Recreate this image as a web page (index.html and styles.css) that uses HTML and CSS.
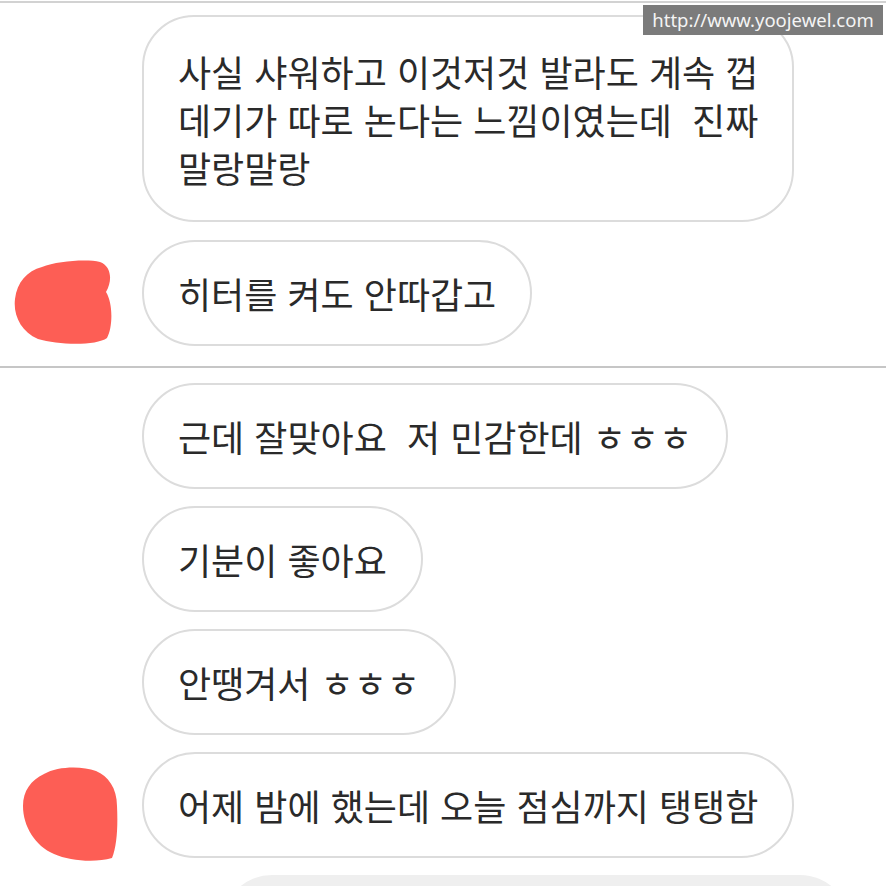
FILE: index.html
```
<!DOCTYPE html>
<html lang="ko">

<head>
    <meta charset="UTF-8">
    <meta name="viewport" content="width=device-width, initial-scale=1.0">
    <title>대화</title>
    <link rel="stylesheet" href="styles.css">
</head>

<body>
    <div class="topline"></div>
    <div class="watermark">http://www.yoojewel.com</div>

    <div class="chat chat-first">
        <div class="row">
            <div class="bubble">사실 샤워하고 이것저것 발라도 계속 껍<br>데기가 따로 논다는 느낌이였는데&nbsp; 진짜<br>말랑말랑</div>
        </div>
        <div class="row row-avatar">
            <div class="avatar avatar-one">
                <svg width="100" height="86" viewBox="0 0 100 86">
                    <path d="M30 8 C45 2 75 0 88 3 C99 7 101 21 94 33 C101 44 101 68 95 79 C84 87 46 86 26 80 C9 73 1 56 3 40 C5 23 15 12 30 8 Z" fill="#fd5e55"/>
                </svg>
            </div>
            <div class="bubble">히터를 켜도 안따갑고</div>
        </div>
    </div>

    <div class="divider"></div>

    <div class="chat chat-second">
        <div class="row">
            <div class="bubble">근데 잘맞아요&nbsp; 저 민감한데 ㅎㅎㅎ</div>
        </div>
        <div class="row">
            <div class="bubble">기분이 좋아요</div>
        </div>
        <div class="row">
            <div class="bubble">안땡겨서 ㅎㅎㅎ</div>
        </div>
        <div class="row row-avatar">
            <div class="avatar avatar-two">
                <svg width="98" height="96" viewBox="0 0 98 96">
                    <path d="M24 8 C38 0 62 0 76 5 C88 10 97 22 97 40 C98 60 97 80 92 92 C75 97 50 95 34 88 C15 80 3 60 3 40 C3 25 11 14 24 8 Z" fill="#fd5e55"/>
                </svg>
            </div>
            <div class="bubble">어제 밤에 했는데 오늘 점심까지 탱탱함</div>
        </div>
        <div class="row row-mine">
            <div class="bubble bubble-mine"></div>
        </div>
    </div>
</body>

</html>
```

FILE: styles.css
```
html,
body {
    margin: 0;
    padding: 0;
    background: #fff;
}

body {
    width: 886px;
    height: 886px;
    overflow: hidden;
    position: relative;
    font-family: "Noto Sans CJK KR", "Noto Sans", sans-serif;
    color: #2a2a2a;
}

.topline {
    height: 1px;
    border-bottom: 2px solid #d2d2d2;
}

.watermark {
    position: absolute;
    top: 5px;
    right: 3px;
    width: 240px;
    height: 30px;
    background: #7b7b7b;
    color: #f4f4f4;
    font-family: "Noto Sans", sans-serif;
    font-size: 18.5px;
    line-height: 30px;
    text-align: center;
}

.chat {
    display: flex;
    flex-direction: column;
    gap: 17px;
}

.chat-first {
    margin-top: 12px;
    gap: 18px;
}

.chat-second {
    margin-top: 15px;
}

.row {
    display: flex;
    align-items: flex-end;
    padding-left: 142px;
}

.row-avatar {
    padding-left: 0;
}

.avatar {
    width: 142px;
    flex-shrink: 0;
    display: flex;
}

.avatar svg {
    display: block;
}

.avatar-one {
    padding-left: 12px;
    width: 130px;
    margin-bottom: 1px;
}

.avatar-two {
    padding-left: 20px;
    width: 122px;
    margin-bottom: -4px;
}

.bubble {
    border: 2px solid #dcdcdc;
    border-radius: 53px;
    padding: 27px 34px;
    font-size: 36px;
    line-height: 48px;
    white-space: nowrap;
    background: #fff;
}

.chat-first .row:first-child .bubble {
    padding-top: 30px;
    padding-bottom: 29px;
    border-radius: 52px;
}

.divider {
    margin-top: 20px;
    border-top: 2px solid #c6c6c6;
}

.row-mine {
    padding-left: 222px;
    height: 13px;
    overflow: hidden;
    align-items: flex-start;
}

.bubble-mine {
    width: 628px;
    height: 100px;
    flex-shrink: 0;
    padding: 0;
    border: none;
    background: #efefef;
    border-radius: 50px;
}
```
